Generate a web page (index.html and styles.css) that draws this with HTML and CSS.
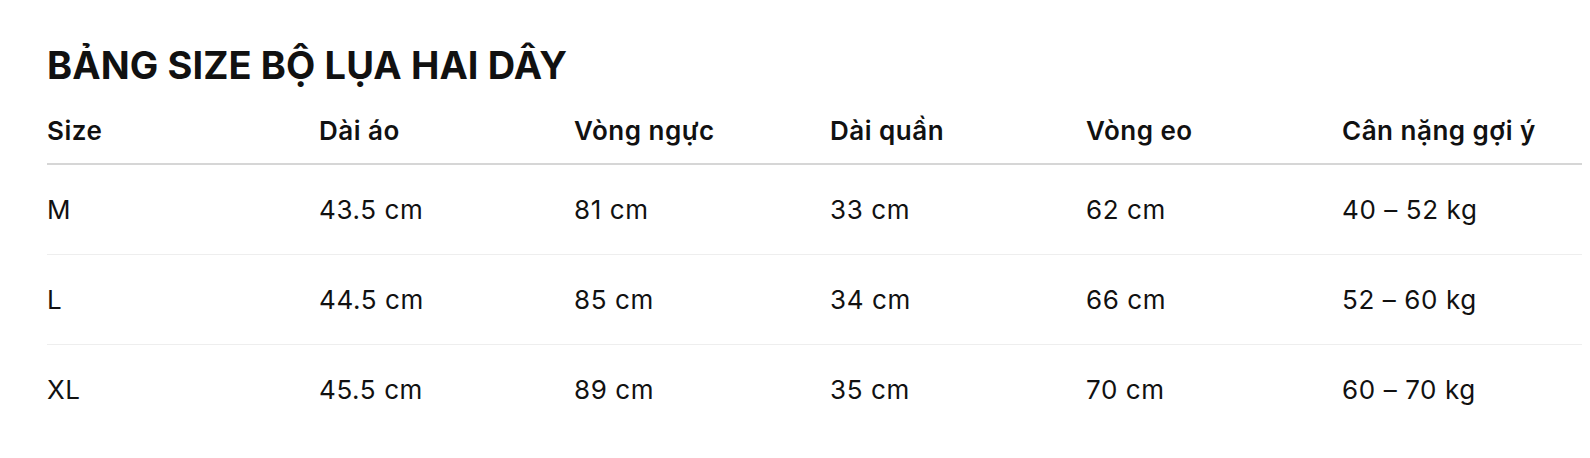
FILE: index.html
```html
<!DOCTYPE html>
<html lang="vi">
<head>
<meta charset="utf-8">
<title>Bảng size bộ lụa hai dây</title>
<link rel="stylesheet" href="styles.css">
</head>
<body>
<section class="size-guide">
  <h2 class="title">BẢNG SIZE BỘ LỤA HAI DÂY</h2>
  <div class="table">
    <div class="row head">
      <div class="cell">Size</div>
      <div class="cell">Dài áo</div>
      <div class="cell">Vòng ngực</div>
      <div class="cell">Dài quần</div>
      <div class="cell">Vòng eo</div>
      <div class="cell">Cân nặng gợi ý</div>
    </div>
    <div class="row">
      <div class="cell">M</div>
      <div class="cell">43.5 cm</div>
      <div class="cell">81 cm</div>
      <div class="cell">33 cm</div>
      <div class="cell">62 cm</div>
      <div class="cell">40 – 52 kg</div>
    </div>
    <div class="row">
      <div class="cell">L</div>
      <div class="cell">44.5 cm</div>
      <div class="cell">85 cm</div>
      <div class="cell">34 cm</div>
      <div class="cell">66 cm</div>
      <div class="cell">52 – 60 kg</div>
    </div>
    <div class="row last">
      <div class="cell">XL</div>
      <div class="cell">45.5 cm</div>
      <div class="cell">89 cm</div>
      <div class="cell">35 cm</div>
      <div class="cell">70 cm</div>
      <div class="cell">60 – 70 kg</div>
    </div>
  </div>
</section>
</body>
</html>
```
FILE: styles.css
```css
html, body {
  margin: 0;
  padding: 0;
  background: #ffffff;
}
body {
  font-family: Inter, "Liberation Sans", Arial, sans-serif;
  color: #111111;
}
.size-guide {
  padding: 42px 8px 0 47px;
}
.title {
  margin: 0;
  font-size: 38px;
  line-height: 46px;
  font-weight: 700;
  letter-spacing: 0.1px;
}
.table {
  margin-top: 28px;
}
.row {
  display: grid;
  grid-template-columns: 272px 255px 256px 256px 256px 1fr;
  font-size: 26px;
  line-height: 30px;
  letter-spacing: 0.6px;
  padding: 29.5px 0;
  border-bottom: 1px solid #eeeeee;
}
.row.head {
  font-weight: 600;
  letter-spacing: 0.5px;
  padding: 0 0 17px;
  border-bottom: 2px solid #d6d6d6;
}
.row.last {
  border-bottom: none;
}
```
